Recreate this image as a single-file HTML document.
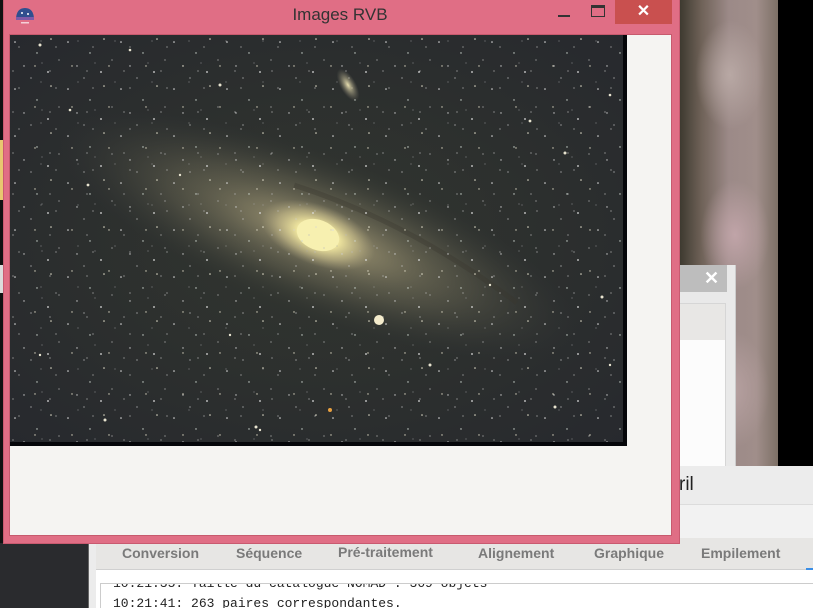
<!DOCTYPE html>
<html><head><meta charset="utf-8"><style>
*{margin:0;padding:0;box-sizing:border-box}
body{width:813px;height:608px;overflow:hidden;position:relative;background:#1b1c1f;font-family:"Liberation Sans",sans-serif}
.abs{position:absolute}
</style></head><body>
<div class="abs" style="left:680px;top:0;width:98px;height:470px;background:linear-gradient(90deg,#3e3a30 0%,#6f6258 22%,#9c8a88 50%,#a08e8a 78%,#7d7066 100%)"></div>
<div class="abs" style="left:695px;top:20px;width:70px;height:110px;border-radius:50%;background:radial-gradient(#b8a8a4,transparent 70%)"></div>
<div class="abs" style="left:700px;top:180px;width:70px;height:110px;border-radius:50%;background:radial-gradient(#c0a4a8,transparent 70%)"></div>
<div class="abs" style="left:690px;top:330px;width:80px;height:120px;border-radius:50%;background:radial-gradient(#b8a2a2,transparent 70%)"></div>
<div class="abs" style="left:778px;top:0;width:35px;height:470px;background:#000"></div>
<div class="abs" style="left:0;top:0;width:4px;height:545px;background:#111"></div>
<div class="abs" style="left:0;top:140px;width:4px;height:60px;background:#e8c870"></div>
<div class="abs" style="left:0;top:265px;width:4px;height:28px;background:#dcdcdc"></div>
<div class="abs" style="left:0;top:543px;width:90px;height:65px;background:#2a2b2e"></div>
<div class="abs" style="left:680px;top:265px;width:56px;height:205px;background:#e9e9e9;border-right:1px solid #ccc"></div>
<div class="abs" style="left:680px;top:265px;width:47px;height:27px;background:#bdbdbd;color:#fff;font-size:18px;font-weight:bold;text-align:center;line-height:27px;padding-left:16px">✕</div>
<div class="abs" style="left:680px;top:303px;width:46px;height:37px;background:#e8e7e5;border-top:1px solid #d6d6d6;border-right:1px solid #d6d6d6"></div>
<div class="abs" style="left:680px;top:340px;width:46px;height:126px;background:#fcfcfc;border-right:1px solid #d6d6d6"></div>
<div class="abs" style="left:88px;top:466px;width:725px;height:142px;background:#ececec;border-left:1px solid #666"></div>
<div class="abs" style="left:679px;top:474px;font-size:19px;color:#222">ril</div>
<div class="abs" style="left:96px;top:504px;width:717px;height:34px;background:#f2f2f2;border-top:1px solid #dcdcdc"></div>
<div class="abs" style="left:96px;top:538px;width:717px;height:32px;background:#e7e6e4;border-bottom:1px solid #d0d0d0;font-weight:bold;font-size:14px;color:#7a7a7a">
<span class="abs" style="left:26px;top:7px">Conversion</span>
<span class="abs" style="left:140px;top:7px">Séquence</span>
<span class="abs" style="left:242px;top:6px">Pré-traitement</span>
<span class="abs" style="left:382px;top:7px">Alignement</span>
<span class="abs" style="left:498px;top:7px">Graphique</span>
<span class="abs" style="left:605px;top:7px">Empilement</span>
</div>
<div class="abs" style="left:806px;top:568px;width:7px;height:3px;background:#3a8ee6"></div>
<div class="abs" style="left:96px;top:570px;width:717px;height:38px;background:#fff"></div>
<div class="abs" style="left:100px;top:583px;width:713px;height:25px;border-top:1px solid #ccc;border-left:1px solid #ccc;overflow:hidden;font-family:'Liberation Mono',monospace;font-size:13px;color:#222">
<div style="position:absolute;left:12px;top:-8px">10:21:35: Taille du catalogue NOMAD : 369 objets</div>
<div style="position:absolute;left:12px;top:12px">10:21:41: 263 paires correspondantes.</div>
</div>
<div class="abs" style="left:3px;top:0;width:677px;height:544px;background:#e06e85;border:1px solid #c95a70;border-top:none"></div>
<div class="abs" style="left:14px;top:6px;width:22px;height:18px;">
<svg width="22" height="18"><path d="M2 14 Q2 2 11 2 Q20 2 20 14Z" fill="#2f4f8f"/><rect x="2" y="11" width="18" height="3" fill="#7f5aa8"/><circle cx="8" cy="7" r="1" fill="#fff"/><circle cx="14" cy="8" r="1" fill="#fff"/><rect x="7" y="16" width="8" height="1.5" fill="#f5d0d8"/></svg></div>
<div class="abs" style="left:0;top:5px;width:680px;text-align:center;font-size:17px;color:#333">Images RVB</div>
<div class="abs" style="left:558px;top:15px;width:12px;height:2px;background:#333"></div>
<div class="abs" style="left:591px;top:5px;width:14px;height:12px;border:1.5px solid #333;border-top-width:3px"></div>
<div class="abs" style="left:615px;top:0;width:57px;height:24px;background:#c9504f;color:#fff;text-align:center;font-size:16px;font-weight:bold;line-height:24px">✕</div>
<div class="abs" style="left:9px;top:34px;width:663px;height:502px;background:#f5f4f2;border:1px solid #c75a6e"></div>
<svg class="abs" style="left:10px;top:35px" width="617" height="411">
<defs>
<radialGradient id="bg" cx="50%" cy="50%" r="70%"><stop offset="0" stop-color="#32362f"/><stop offset="1" stop-color="#27292e"/></radialGradient>
<radialGradient id="halo"><stop offset="0" stop-color="#aaa07a" stop-opacity=".9"/><stop offset=".5" stop-color="#74705a" stop-opacity=".55"/><stop offset="1" stop-color="#3a3d38" stop-opacity="0"/></radialGradient>
<radialGradient id="core"><stop offset="0" stop-color="#fffce0"/><stop offset=".35" stop-color="#f2e8a0"/><stop offset=".7" stop-color="#c8bd8a" stop-opacity=".6"/><stop offset="1" stop-color="#a89f7c" stop-opacity="0"/></radialGradient>
<radialGradient id="m110"><stop offset="0" stop-color="#e8dfb0"/><stop offset="1" stop-color="#8a8470" stop-opacity="0"/></radialGradient>
<pattern id="st" width="53" height="47" patternUnits="userSpaceOnUse">
<circle cx="5" cy="7" r=".8" fill="#ddd"/><circle cx="27" cy="18" r=".7" fill="#cfd8d0"/><circle cx="41" cy="4" r=".8" fill="#e0dcc8"/><circle cx="14" cy="31" r=".7" fill="#ccc"/><circle cx="38" cy="37" r=".9" fill="#ddd"/><circle cx="49" cy="25" r=".6" fill="#bbb"/><circle cx="21" cy="43" r=".6" fill="#ccc"/><circle cx="32" cy="28" r=".5" fill="#aaa"/>
</pattern>
<pattern id="st2" width="37" height="41" patternUnits="userSpaceOnUse">
<circle cx="9" cy="12" r=".6" fill="#bbb"/><circle cx="25" cy="31" r=".7" fill="#d8d4c0"/><circle cx="31" cy="6" r=".5" fill="#aaa"/><circle cx="3" cy="36" r=".6" fill="#bbb"/>
</pattern>
</defs>
<rect width="617" height="411" fill="url(#bg)"/>
<g transform="translate(308,200) rotate(21)">
<ellipse rx="275" ry="80" fill="url(#halo)"/>
<ellipse rx="160" ry="45" fill="url(#halo)"/>
<path d="M-40 -38 Q80 -45 210 -8" stroke="#3a372e" stroke-width="5" fill="none" opacity=".35"/>
<ellipse rx="60" ry="30" fill="url(#core)"/>
<ellipse rx="22" ry="15" fill="#f7f0b0"/>
</g>
<rect width="617" height="411" fill="url(#st)"/>
<rect width="617" height="411" fill="url(#st2)"/>
<ellipse cx="338" cy="50" rx="8" ry="18" transform="rotate(-30 338 50)" fill="url(#m110)"/>
<circle cx="369" cy="285" r="5" fill="#f4eccc"/>
<g fill="#e8e4d0">
<circle cx="30" cy="10" r="1.5"/><circle cx="120" cy="15" r="1.3"/><circle cx="210" cy="50" r="1.5"/><circle cx="78" cy="150" r="1.4"/><circle cx="95" cy="385" r="1.5"/><circle cx="320" cy="375" r="2" fill="#e8a040"/><circle cx="545" cy="372" r="1.5"/><circle cx="592" cy="262" r="1.5"/><circle cx="555" cy="118" r="1.5"/><circle cx="520" cy="86" r="1.4"/><circle cx="600" cy="60" r="1.3"/><circle cx="420" cy="330" r="1.5"/><circle cx="250" cy="395" r="1.2"/><circle cx="30" cy="320" r="1.2"/><circle cx="480" cy="250" r="1.2"/><circle cx="60" cy="75" r="1.3"/><circle cx="220" cy="300" r="1.2"/><circle cx="600" cy="330" r="1.2"/><circle cx="170" cy="140" r="1.2"/><circle cx="246" cy="392" r="1.5"/>
</g>
<rect x="613" width="4" height="411" fill="#05060a"/><rect y="407" width="617" height="4" fill="#05060a"/>
</svg>
</body></html>
